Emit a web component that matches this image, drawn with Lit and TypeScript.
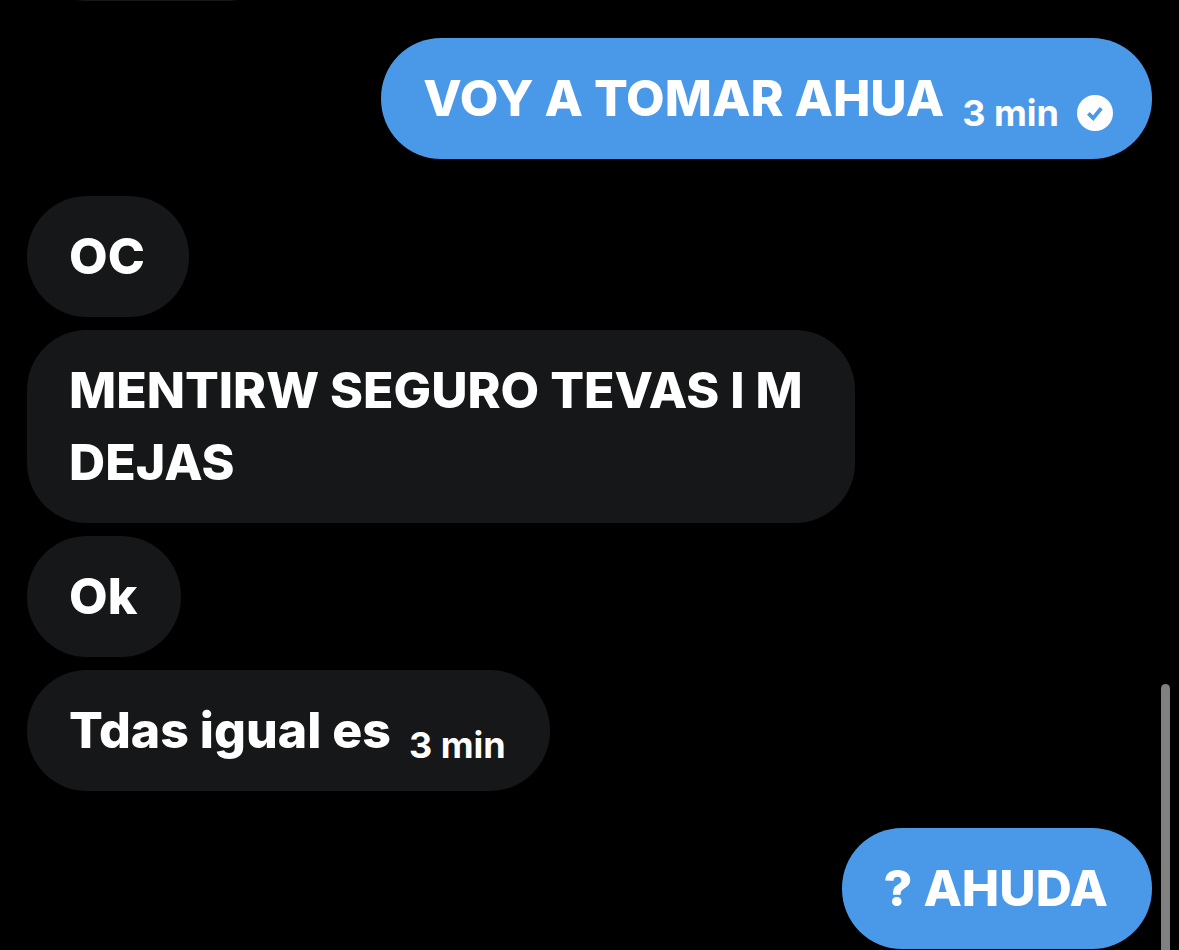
import { LitElement, html, css, nothing } from "lit";
import { customElement, property } from "lit/decorators.js";

interface Message {
  text: string;
  time?: string;
  sent?: boolean;
}

interface Group {
  own: boolean;
  messages: Message[];
}

const GROUPS: Group[] = [
  { own: true, messages: [{ text: "VOY A TOMAR AHUA", time: "3 min", sent: true }] },
  {
    own: false,
    messages: [
      { text: "OC" },
      { text: "MENTIRW SEGURO TEVAS I M DEJAS" },
      { text: "Ok" },
      { text: "Tdas igual es", time: "3 min" },
    ],
  },
  { own: true, messages: [{ text: "? AHUDA" }] },
];

@customElement("message-bubble")
export class MessageBubble extends LitElement {
  @property({ attribute: false }) message!: Message;

  static styles = css`
    :host {
      display: flex;
      box-sizing: border-box;
      max-width: 828px;
      border-radius: 60px;
      background: var(--bubble);
      color: #fff;
      font-weight: 800;
    }
    .body {
      display: flex;
      align-items: flex-end;
      gap: 18px;
      padding: 24px 44px 25px 42px;
    }
    .with-receipt {
      padding-right: 39px;
    }
    .text {
      margin: 0;
      font-size: 50px;
      line-height: 72px;
    }
    .time {
      font-size: 36px;
      font-weight: 700;
      line-height: 42px;
      white-space: nowrap;
    }
    .sent {
      display: block;
      flex: none;
      width: 36px;
      height: 36px;
      margin-bottom: 3px;
    }
  `;

  render() {
    const { text, time, sent } = this.message;
    return html`<div class="body ${sent ? "with-receipt" : ""}">
      <p class="text">${text}</p>
      ${time ? html`<time class="time">${time}</time>` : nothing}
      ${sent
        ? html`<svg class="sent" viewBox="0 0 36 36" role="img" aria-label="Enviado">
            <circle cx="18" cy="18" r="18" fill="#fff" />
            <path d="M11.3 18.3 16.2 23.2 24.2 13.2" fill="none" stroke="#4a99e9" stroke-width="3.8" />
          </svg>`
        : nothing}
    </div>`;
  }
}

@customElement("app-root")
export class AppRoot extends LitElement {
  static styles = css`
    :host {
      display: block;
      position: relative;
      box-sizing: border-box;
      height: 100vh;
      overflow: hidden;
      background: #000;
      font-family: Inter, "Liberation Sans", sans-serif;
    }
    .thread {
      display: flex;
      flex-direction: column;
      gap: 37px;
      padding: 0 27px;
    }
    .group {
      display: flex;
      flex-direction: column;
      align-items: flex-start;
      gap: 13px;
      --bubble: #161719;
    }
    .own {
      align-items: flex-end;
      --bubble: #4a99e9;
    }
    .earlier {
      box-sizing: border-box;
      width: 260px;
      height: 121px;
      margin-top: -120px;
      border-radius: 60px;
      background: var(--bubble);
    }
    .scrollbar {
      position: absolute;
      top: 72%;
      right: 9px;
      bottom: -9px;
      width: 9px;
      border-radius: 5px;
      background: #808080;
    }
  `;

  render() {
    return html`
      <main class="thread">
        <div class="group"><div class="earlier"></div></div>
        ${GROUPS.map(
          (g) => html`<section class="group ${g.own ? "own" : ""}">
            ${g.messages.map((m) => html`<message-bubble .message=${m}></message-bubble>`)}
          </section>`
        )}
      </main>
      <div class="scrollbar"></div>
    `;
  }
}
